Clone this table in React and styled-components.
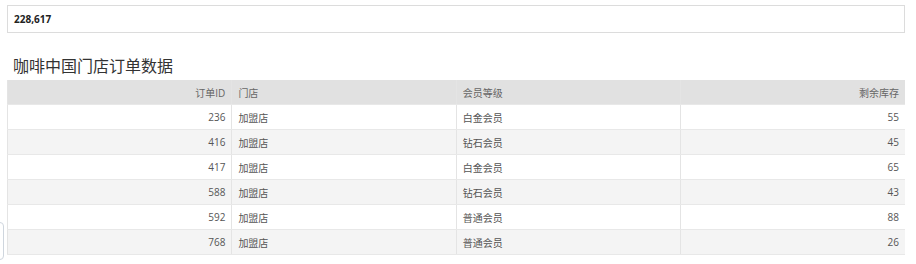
import React from 'react';
import styled, { createGlobalStyle } from 'styled-components';

const GlobalStyle = createGlobalStyle`
  body {
    margin: 0;
    padding: 5px 11px 0 7px;
    background: #fff;
    font-family: "Open Sans", "Noto Sans CJK SC", sans-serif;
    color: #555;
  }
`;

// Summary box at the top
const TotalBox = styled.div`
  height: 26px;
  border: 1px solid #dcdcdc;
  display: flex;
  align-items: center;
  padding-left: 6px;
  font-size: 10px;
  font-weight: 700;
  color: #222;
`;

const Title = styled.h2`
  margin: 22px 0 3px 6px;
  font-size: 16px;
  font-weight: 400;
  color: #333;
  line-height: 22px;
`;

const Table = styled.table`
  width: 100%;
  border-collapse: collapse;
  table-layout: fixed;
  font-size: 10px;
  th,
  td {
    height: 24px;
    padding: 0 6px;
    border-left: 1px solid #e4e4e4;
    border-bottom: 1px solid #e8e8e8;
    font-weight: 400;
  }
  th {
    background: #e1e1e1;
    color: #666;
  }
  tbody tr:nth-child(even) td {
    background: #f4f4f4;
  }
`;

const Cell = styled.td`
  text-align: ${(p) => (p.$right ? 'right' : 'left')};
`;

const Head = styled.th`
  text-align: ${(p) => (p.$right ? 'right' : 'left')};
`;

const SideTab = styled.div`
  position: fixed;
  left: -8px;
  top: 222px;
  width: 10px;
  height: 36px;
  border: 1px solid #cfd6de;
  border-radius: 4px;
  background: #fff;
`;

const rows = [
  [236, '加盟店', '白金会员', 55],
  [416, '加盟店', '钻石会员', 45],
  [417, '加盟店', '白金会员', 65],
  [588, '加盟店', '钻石会员', 43],
  [592, '加盟店', '普通会员', 88],
  [768, '加盟店', '普通会员', 26],
];

const App = () => {
  return (
    <>
      <GlobalStyle />
      <TotalBox>228,617</TotalBox>
      <Title>咖啡中国门店订单数据</Title>
      <Table>
        <thead>
          <tr>
            <Head $right>订单ID</Head>
            <Head>门店</Head>
            <Head>会员等级</Head>
            <Head $right>剩余库存</Head>
          </tr>
        </thead>
        <tbody>
          {rows.map((r) => (
            <tr key={r[0]}>
              <Cell $right>{r[0]}</Cell>
              <Cell>{r[1]}</Cell>
              <Cell>{r[2]}</Cell>
              <Cell $right>{r[3]}</Cell>
            </tr>
          ))}
        </tbody>
      </Table>
      <SideTab />
    </>
  );
};

export default App;
